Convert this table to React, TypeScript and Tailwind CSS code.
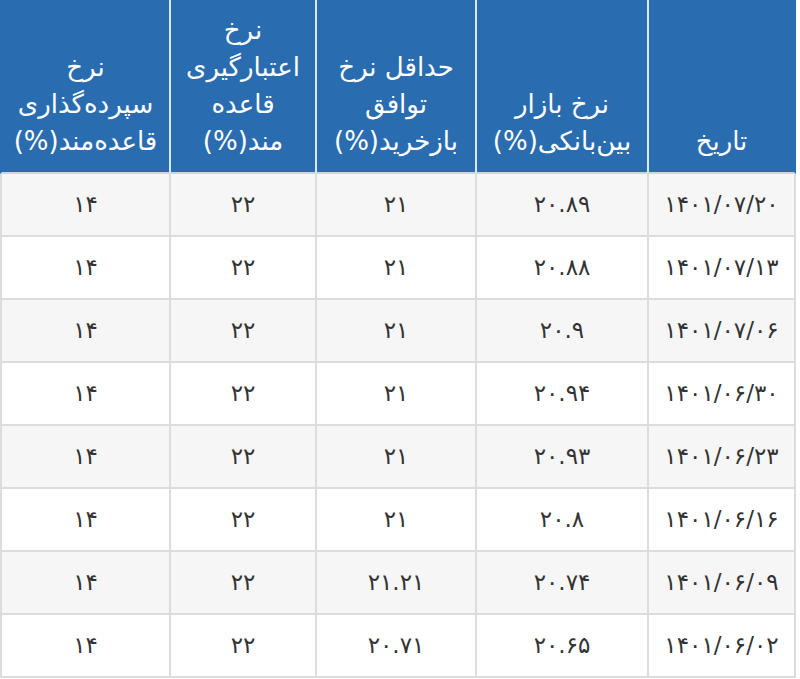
import React from "react";

const headers: { lines: string[]; w: string }[] = [
  { lines: ["تاریخ"], w: "w-[149px]" },
  { lines: ["نرخ بازار", "بین‌بانکی(%)"], w: "w-[172px]" },
  { lines: ["حداقل نرخ", "توافق", "بازخرید(%)"], w: "w-[160px]" },
  { lines: ["نرخ", "اعتبارگیری", "قاعده", "مند(%)"], w: "w-[146px]" },
  { lines: ["نرخ", "سپرده‌گذاری", "قاعده‌مند(%)"], w: "w-[169px]" },
];

const rows: string[][] = [
  ["۱۴۰۱/۰۷/۲۰", "۲۰.۸۹", "۲۱", "۲۲", "۱۴"],
  ["۱۴۰۱/۰۷/۱۳", "۲۰.۸۸", "۲۱", "۲۲", "۱۴"],
  ["۱۴۰۱/۰۷/۰۶", "۲۰.۹", "۲۱", "۲۲", "۱۴"],
  ["۱۴۰۱/۰۶/۳۰", "۲۰.۹۴", "۲۱", "۲۲", "۱۴"],
  ["۱۴۰۱/۰۶/۲۳", "۲۰.۹۳", "۲۱", "۲۲", "۱۴"],
  ["۱۴۰۱/۰۶/۱۶", "۲۰.۸", "۲۱", "۲۲", "۱۴"],
  ["۱۴۰۱/۰۶/۰۹", "۲۰.۷۴", "۲۱.۲۱", "۲۲", "۱۴"],
  ["۱۴۰۱/۰۶/۰۲", "۲۰.۶۵", "۲۰.۷۱", "۲۲", "۱۴"],
];

export default function App() {
  return (
    <div className="w-[800px] h-[679px] bg-white overflow-hidden" dir="ltr">
      <table
        dir="rtl"
        className="table-fixed w-[796px] border-separate border-spacing-0 font-['DejaVu_Sans',sans-serif]"
      >
        <thead>
          <tr>
            {headers.map((h, i) => (
              <th
                key={i}
                className={`${h.w} h-[174px] align-bottom bg-[#2a6cb0] text-white font-normal text-[26px] leading-[37px] pb-[12px] border-b-2 border-b-[#c9d6e4] ${
                  i === 0 ? "border-r-2 border-r-[#2a6cb0]" : ""
                } border-l-2 ${i === 4 ? "border-l-[#2a6cb0]" : "border-l-[#dbe7f3]"}`}
              >
                {h.lines.map((l, j) => (
                  <div key={j}>{l}</div>
                ))}
              </th>
            ))}
          </tr>
        </thead>
        <tbody>
          {rows.map((r, ri) => (
            <tr key={ri} className={ri % 2 === 0 ? "bg-[#f6f6f6]" : "bg-white"}>
              {r.map((c, ci) => (
                <td
                  key={ci}
                  className={`h-[63px] text-center align-middle text-[#333333] text-[23px] border-b-2 border-b-[#dcdcdc] border-l-2 border-l-[#dcdcdc] ${
                    ci === 0 ? "border-r-2 border-r-[#dcdcdc]" : ""
                  }`}
                >
                  <span dir="ltr">{c}</span>
                </td>
              ))}
            </tr>
          ))}
        </tbody>
      </table>
    </div>
  );
}
